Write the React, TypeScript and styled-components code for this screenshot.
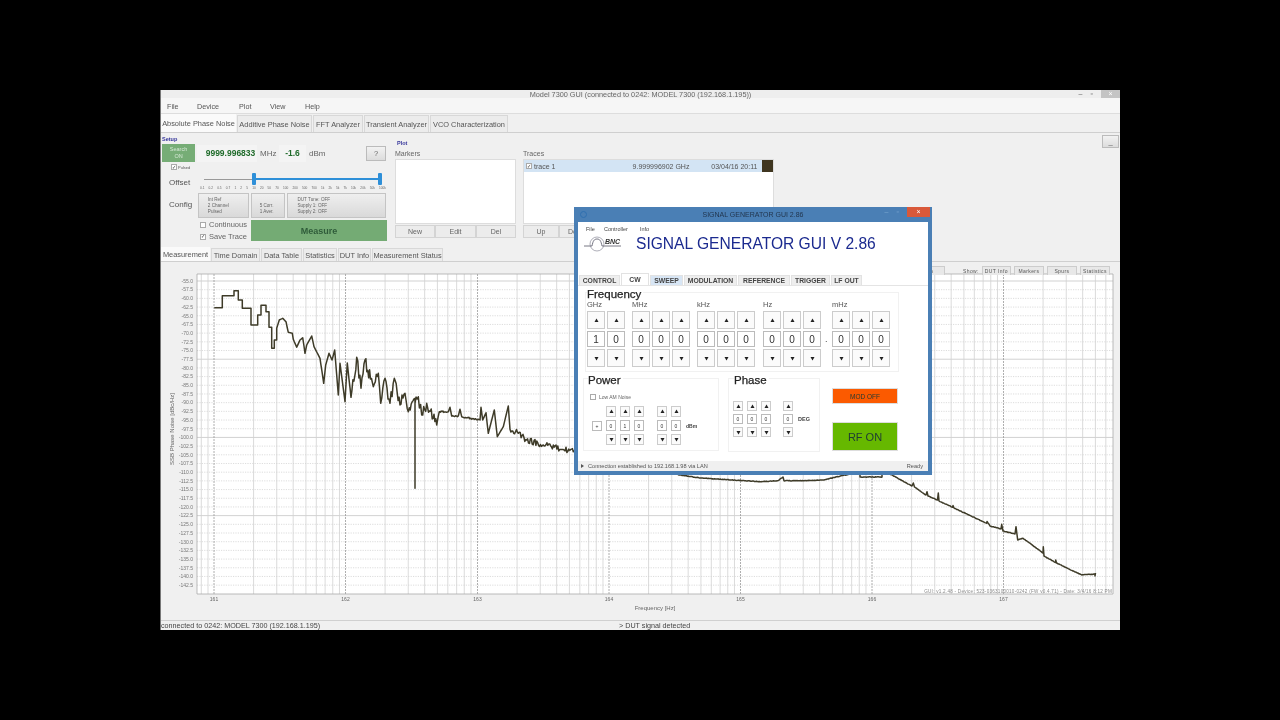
import React from "react";
import styled, { createGlobalStyle } from "styled-components";

const GlobalStyle = createGlobalStyle`
  html, body {
    margin: 0;
    padding: 0;
    background: #000;
    overflow: hidden;
  }
  * { box-sizing: border-box; }
`;

const Page = styled.div`
  width: 1280px;
  height: 720px;
  background: #000;
  padding: 90px 0 0 160px;
  font-family: "Liberation Sans", Arial, sans-serif;
  color: #555;
  filter: blur(0.35px);
`;

const AppWindow = styled.div`
  position: relative;
  width: 960px;
  height: 540px;
  background: #f0f0f0;
  border-left: 1px solid #777;
  overflow: hidden;
`;

const TitleBar = styled.div`
  height: 8px;
  background: #eee;
  display: flex;
  align-items: center;
  justify-content: center;
  font-size: 7.3px;
  color: #666;
  position: relative;
`;

const WinControls = styled.div`
  position: absolute;
  right: 0;
  top: 0;
  height: 8px;
  display: flex;
  align-items: flex-start;
  gap: 8px;
  color: #666;
  font-size: 7px;
  line-height: 7px;
`;

const CloseGray = styled.span`
  width: 19px;
  height: 8px;
  background: #c4c4c4;
  color: #fff;
  text-align: center;
`;

const MenuBar = styled.div`
  height: 16px;
  background: #f6f6f6;
  border-bottom: 1px solid #ddd;
  display: flex;
  align-items: center;
  padding: 2px 0 0 6px;
  font-size: 7.2px;
  color: #555;
`;

const MenuItem = styled.span<{ $w: number }>`
  width: ${(p) => p.$w}px;
`;

const TabRow = styled.div<{ $h: number }>`
  display: flex;
  align-items: flex-end;
  height: ${(p) => p.$h}px;
  border-bottom: 1px solid #cfcfcf;
  background: #f0f0f0;
`;

const Tab = styled.div<{ $w: number; $active?: boolean }>`
  width: ${(p) => p.$w}px;
  height: ${(p) => (p.$active ? "100%" : "calc(100% - 1px)")};
  background: ${(p) => (p.$active ? "#fafafa" : "#ececec")};
  border: 1px solid ${(p) => (p.$active ? "transparent" : "#d8d8d8")};
  border-bottom: none;
  margin-right: 1px;
  display: flex;
  align-items: center;
  justify-content: center;
  font-size: 7.4px;
  color: #555;
  white-space: nowrap;
`;

const ControlArea = styled.div`
  height: 114px;
  display: flex;
  align-items: flex-start;
  padding-left: 1px;
`;

const SetupPanel = styled.div`
  width: 226px;
  margin-right: 7px;
  display: flex;
  flex-direction: column;
  padding-top: 2px;
`;

const SectionTitle = styled.div`
  color: #35359a;
  font-size: 5.5px;
  font-weight: bold;
  height: 9px;
  line-height: 9px;
`;

const ReadoutRow = styled.div`
  height: 18px;
  display: flex;
  align-items: center;
`;

const SearchBox = styled.div`
  width: 33px;
  height: 18px;
  background: #76ad76;
  color: #d5e8d5;
  font-size: 5.5px;
  line-height: 7px;
  text-align: center;
  padding-top: 2px;
  margin-right: 2px;
`;

const Readout = styled.div<{ $w: number; $pl: number }>`
  width: ${(p) => p.$w}px;
  height: 17px;
  background: #f4f4f4;
  color: #1f6b2a;
  font-size: 8.5px;
  font-weight: bold;
  display: flex;
  align-items: center;
  justify-content: center;
  padding-left: ${(p) => p.$pl}px;
  white-space: nowrap;
`;

const Unit = styled.span<{ $w: number }>`
  width: ${(p) => p.$w}px;
  font-size: 8px;
  color: #666;
  padding-left: 3px;
`;

const GreyButton = styled.div<{ $w: number; $h: number }>`
  width: ${(p) => p.$w}px;
  height: ${(p) => p.$h}px;
  border: 1px solid #bbb;
  background: linear-gradient(#f2f2f2, #dcdcdc);
  display: flex;
  align-items: center;
  justify-content: center;
  font-size: 7.5px;
  color: #666;
`;

const PulsedRow = styled.div`
  height: 10px;
  display: flex;
  align-items: center;
  gap: 1px;
  padding-left: 9px;
  font-size: 4px;
  color: #555;
`;

const Check = styled.span<{ $size: number }>`
  display: inline-flex;
  align-items: center;
  justify-content: center;
  width: ${(p) => p.$size}px;
  height: ${(p) => p.$size}px;
  background: #fff;
  border: 1px solid #aaa;
  font-size: ${(p) => p.$size - 1}px;
  line-height: 1;
  color: #333;
  flex-shrink: 0;
`;

const SliderRow = styled.div`
  height: 20px;
  display: flex;
  align-items: flex-start;
`;

const RowLabel = styled.div`
  width: 36px;
  padding: 6px 0 0 7px;
  font-size: 8px;
  color: #555;
`;

const SliderBox = styled.div`
  width: 188px;
  padding-left: 2px;
`;

const SliderTrack = styled.div`
  position: relative;
  margin: 7px 4px 0 4px;
  height: 1px;
  background: #999;
`;

const SliderFill = styled.div`
  position: absolute;
  left: 50px;
  right: 2px;
  top: -1px;
  height: 2px;
  background: #2e8fd8;
`;

const SliderThumb = styled.div<{ $left: number }>`
  position: absolute;
  left: ${(p) => p.$left}px;
  top: -6px;
  width: 4px;
  height: 12px;
  background: #2e8fd8;
  border-radius: 1px;
`;

const SliderTicks = styled.div`
  display: flex;
  justify-content: space-between;
  margin-top: 6px;
  font-size: 3.2px;
  color: #666;
`;

const ConfigRow = styled.div`
  height: 25px;
  display: flex;
  margin-top: 1px;
`;

const ConfigLabel = styled(RowLabel)`
  padding-top: 7px;
`;

const ConfigButton = styled.div<{ $w: number; $center?: boolean }>`
  width: ${(p) => p.$w}px;
  margin-right: 2px;
  border: 1px solid #c4c4c4;
  background: linear-gradient(#efefef, #d9d9d9);
  font-size: 4.6px;
  line-height: 6px;
  color: #666;
  padding: 3px 0 0 ${(p) => (p.$center ? 8 : 9)}px;
`;

const MeasureRow = styled.div`
  height: 21px;
  margin-top: 2px;
  display: flex;
`;

const CheckColumn = styled.div`
  width: 89px;
  padding-left: 38px;
  display: flex;
  flex-direction: column;
  justify-content: space-between;
`;

const CheckLine = styled.label`
  display: flex;
  align-items: center;
  gap: 3px;
  font-size: 7.5px;
  color: #666;
  white-space: nowrap;
`;

const MeasureButton = styled.div`
  width: 136px;
  background: #74ab74;
  color: #2f5c3a;
  font-size: 9px;
  font-weight: bold;
  display: flex;
  align-items: center;
  justify-content: center;
`;

const ListColumn = styled.div<{ $w: number }>`
  width: ${(p) => p.$w}px;
  margin-right: 7px;
  display: flex;
  flex-direction: column;
`;

const PlotTitle = styled(SectionTitle)`
  margin: 6px 0 0 2px;
  height: 8px;
  line-height: 8px;
`;

const ListLabel = styled.div`
  font-size: 7px;
  color: #666;
  height: 12px;
  line-height: 13px;
`;

const ListBox = styled.div`
  height: 65px;
  background: #fff;
  border: 1px solid #ddd;
`;

const TraceRow = styled.div`
  height: 12px;
  background: #d3e4f4;
  display: flex;
  align-items: center;
  padding-left: 2px;
  font-size: 7px;
  color: #555;
`;

const TraceName = styled.span`
  width: 101px;
  padding-left: 2px;
`;

const TraceValue = styled.span<{ $w: number }>`
  width: ${(p) => p.$w}px;
  white-space: nowrap;
`;

const Swatch = styled.span`
  width: 11px;
  height: 12px;
  background: #3f3620;
`;

const ListButtons = styled.div`
  display: flex;
  margin-top: 1px;
`;

const ListButton = styled.div<{ $w: number }>`
  width: ${(p) => p.$w}px;
  height: 13px;
  background: #ececec;
  border: 1px solid #d4d4d4;
  display: flex;
  align-items: center;
  justify-content: center;
  font-size: 7px;
  color: #666;
`;

const CollapseButton = styled(GreyButton)`
  margin: 2px 1px 0 auto;
`;

const PlotArea = styled.div`
  position: relative;
  height: 358px;
  background: #f0f0f0;
`;

const Chart = styled.svg`
  display: block;
`;

const ShowTabs = styled.div`
  position: absolute;
  left: 739px;
  top: 4px;
  display: flex;
  align-items: center;
  height: 9px;
  font-size: 5px;
  letter-spacing: 0.4px;
  color: #555;
`;

const ShowLabel = styled.span`
  margin-left: 18px;
`;

const ShowTab = styled.div<{ $w: number; $ml: number }>`
  width: ${(p) => p.$w}px;
  margin-left: ${(p) => p.$ml}px;
  height: 9px;
  border: 1px solid #ccc;
  border-bottom: none;
  background: #e8e8e8;
  display: flex;
  align-items: center;
  justify-content: center;
  white-space: nowrap;
`;

const StatusBar = styled.div`
  height: 10px;
  border-top: 1px solid #d0d0d0;
  display: flex;
  font-size: 7.2px;
  line-height: 10px;
  color: #444;
  white-space: nowrap;
`;

const StatusLeft = styled.span`
  width: 458px;
`;

/* signal generator dialog, a window floating over the main one */
const Dialog = styled.div`
  position: absolute;
  left: 413px;
  top: 117px;
  width: 358px;
  height: 268px;
  background: #4a7fb5;
  padding: 0 4px 4px;
  display: flex;
  flex-direction: column;
  color: #333;
`;

const DialogTitle = styled.div`
  position: relative;
  height: 15px;
  display: flex;
  align-items: center;
  justify-content: center;
  font-size: 7px;
  color: #22364f;
`;

const DialogIcon = styled.span`
  position: absolute;
  left: 2px;
  top: 4px;
  width: 7px;
  height: 7px;
  border: 1px solid #2f6fb0;
  border-radius: 50%;
`;

const DialogControls = styled.div`
  position: absolute;
  right: -2px;
  top: 0;
  display: flex;
  gap: 8px;
  color: #7ba6d0;
  font-size: 7px;
  line-height: 10px;
`;

const DialogClose = styled.span`
  width: 23px;
  height: 10px;
  background: #d9593a;
  color: #fff;
  text-align: center;
`;

const DialogBody = styled.div`
  flex: 1;
  background: #fff;
  display: flex;
  flex-direction: column;
`;

const DialogMenu = styled.div`
  height: 13px;
  display: flex;
  align-items: center;
  padding-left: 8px;
  font-size: 5.5px;
  color: #444;
`;

const Banner = styled.div`
  height: 38px;
  display: flex;
  align-items: flex-start;
  padding-left: 6px;
`;

const BannerTitle = styled.div`
  margin-left: 14px;
  font-size: 15.6px;
  line-height: 18px;
  color: #1b2a8f;
  white-space: nowrap;
`;

const DialogTabs = styled.div`
  height: 12px;
  display: flex;
  align-items: flex-end;
  padding-left: 1px;
  background: #fff;
`;

const DialogTab = styled.div<{ $w: number; $state?: "active" | "hover" }>`
  width: ${(p) => p.$w}px;
  height: ${(p) => (p.$state === "active" ? "12px" : "10px")};
  margin-right: 1px;
  background: ${(p) => (p.$state === "active" ? "#fff" : p.$state === "hover" ? "#d8e6f5" : "#eee")};
  border: 1px solid #e2e2e2;
  border-bottom: none;
  font-size: 6.8px;
  font-weight: bold;
  color: #444;
  display: flex;
  align-items: center;
  justify-content: center;
  white-space: nowrap;
`;

const DialogContent = styled.div`
  flex: 1;
  border-top: 1px solid #e4e4e4;
  padding: 6px 0 0 7px;
  display: flex;
  flex-direction: column;
  gap: 6px;
`;

const GroupBox = styled.div<{ $w: number; $h: number }>`
  position: relative;
  width: ${(p) => p.$w}px;
  height: ${(p) => p.$h}px;
  border: 1px solid #f1f1f1;
`;

const GroupTitle = styled.div<{ $left: number }>`
  position: absolute;
  left: ${(p) => p.$left}px;
  top: -5px;
  background: #fff;
  padding-right: 2px;
  font-size: 11.5px;
  line-height: 12px;
  color: #222;
  -webkit-text-stroke: 0.25px #222;
`;

const FrequencyRow = styled.div`
  display: flex;
  align-items: flex-start;
  padding: 6px 0 0 1px;
`;

const DigitGroup = styled.div<{ $mr: number }>`
  margin-right: ${(p) => p.$mr}px;
`;

const GroupUnit = styled.div`
  height: 12px;
  font-size: 7.5px;
  line-height: 12px;
  color: #555;
`;

const DigitColumns = styled.div<{ $gap: number }>`
  display: flex;
  gap: ${(p) => p.$gap}px;
`;

const DigitColumn = styled.div`
  display: flex;
  flex-direction: column;
`;

const StepCell = styled.div<{ $w: number; $h: number }>`
  width: ${(p) => p.$w}px;
  height: ${(p) => p.$h}px;
  border: 1px solid #ccc;
  background: #fbfbfb;
  display: flex;
  align-items: center;
  justify-content: center;
  color: #333;
`;

const ValueCell = styled(StepCell)<{ $fs: number; $my: number }>`
  margin: ${(p) => p.$my}px 0;
  background: #fff;
  border-color: #bbb;
  font-size: ${(p) => p.$fs}px;
  color: #333;
`;

const Arrow = styled.svg`
  display: block;
`;

const Dot = styled.div`
  width: 11px;
  margin: 31px 0 0 0;
  padding-left: 4px;
  font-size: 9px;
  line-height: 18px;
  color: #444;
`;

const LowerRow = styled.div`
  display: flex;
  align-items: flex-start;
  margin-left: -2px;
`;

const NoiseLine = styled.div`
  display: flex;
  align-items: center;
  gap: 3px;
  padding: 8px 0 0 6px;
  font-size: 5px;
  color: #666;
  height: 27px;
`;

const SmallGrid = styled.div<{ $left: number; $top: number }>`
  display: flex;
  align-items: center;
  gap: 4px;
  margin-left: ${(p) => p.$left}px;
  margin-top: ${(p) => p.$top}px;
`;

const SmallGap = styled.div<{ $w: number }>`
  width: ${(p) => p.$w}px;
`;

const SignButton = styled.div`
  width: 10px;
  height: 10px;
  border: 1px solid #bbb;
  font-size: 5px;
  display: flex;
  align-items: center;
  justify-content: center;
`;

const SmallUnit = styled.div<{ $ml: number; $fs: number }>`
  margin-left: ${(p) => p.$ml}px;
  font-size: ${(p) => p.$fs}px;
  font-weight: bold;
  color: #444;
`;

const ActionColumn = styled.div`
  margin: 10px 0 0 12px;
  display: flex;
  flex-direction: column;
  gap: 18px;
`;

const ActionButton = styled.div<{ $bg: string; $h: number; $fs: number }>`
  width: 66px;
  height: ${(p) => p.$h}px;
  background: ${(p) => p.$bg};
  border: 1px solid #ddd;
  display: flex;
  align-items: center;
  justify-content: center;
  font-size: ${(p) => p.$fs}px;
  color: #1f3a34;
`;

const DialogStatus = styled.div`
  height: 10px;
  background: #f0f0f0;
  display: flex;
  align-items: center;
  justify-content: space-between;
  padding: 0 5px 0 3px;
  font-size: 5.6px;
  color: #555;
`;

const StatusText = styled.span`
  display: flex;
  align-items: center;
  gap: 4px;
`;

const StatusArrow = styled.span`
  width: 0;
  height: 0;
  border-left: 3px solid #555;
  border-top: 2px solid transparent;
  border-bottom: 2px solid transparent;
`;

// chart geometry, in page pixels
const OX = 161;
const OY = 262;
const PLOT = { left: 197, right: 1113, top: 274, bottom: 594 };
const DECADES = [214, 345.5, 477.5, 609, 740.5, 872, 1003.5];
const DECADE = 131.5;

const yLabels: { y: number; label: string }[] = [];
for (let i = 0; i <= 35; i++) {
  yLabels.push({ y: 281 + i * 8.69, label: (-55 - i * 2.5).toFixed(1) });
}

const minorLines: { x: number; major: boolean }[] = [];
[201.3, 208].forEach((x) => minorLines.push({ x, major: false }));
DECADES.forEach((d) => {
  minorLines.push({ x: d, major: true });
  for (let n = 2; n <= 9; n++) {
    const x = d + Math.log10(n) * DECADE;
    if (x < PLOT.right) minorLines.push({ x, major: false });
  }
});

// hand-read points of the trace, the noisy stretch gets jitter added below
const tracePoints: [number, number][] = [
  [214.3, 307.7], [222.3, 307.7], [222.3, 295.7], [234, 295.7], [234, 290.7], [238.3, 290.7],
  [238.3, 300], [242.3, 300], [242.3, 308.3], [251, 308.3], [251, 325], [257.7, 325],
  [257.7, 315], [261, 315], [261, 305.3], [266, 305.3], [266, 311.7], [269, 311.7],
  [269, 327.3], [271.7, 327.3], [271.7, 348.3], [274.3, 348.3], [274.3, 340], [276.7, 340],
  [276.7, 328.3], [279.3, 320], [282.7, 318.3], [286, 321.7], [288.3, 332.3], [292.3, 333.3],
  [293.3, 339.3], [296.7, 347.3], [300, 340], [302.7, 337.7], [305, 353.3], [306.7, 345],
  [311.7, 336], [314, 346.7], [320, 358.3], [323.7, 383.3], [325.7, 365], [329, 353.3],
  [332, 360], [334.7, 350], [338.3, 395], [340, 363.3], [345, 401.7], [347.3, 363],
  [351, 397.3], [356.7, 357.3], [361, 388.3], [365, 360], [373.3, 386.7], [378.3, 373.3],
  [380.7, 403.3], [385, 378.3], [390, 403.3], [394.3, 378.3], [400, 405], [405, 393.3],
  [408.3, 411.7], [415, 398.3], [415, 488.3], [415, 403.3], [418.3, 396.7], [421.7, 415],
  [426.7, 403.3], [436.7, 425], [439.3, 411.7], [448.3, 411.7], [450, 407.3], [451.7, 416],
  [458.3, 416], [460, 409.3], [461.7, 416.7], [480, 420], [481, 407.3], [482.7, 420],
  [486, 412.7], [488.3, 433.3], [494.3, 410], [497.3, 436.7], [503.3, 426.7], [508.3, 406],
  [510, 429.3], [518.3, 433.3], [526.7, 440], [543.3, 445], [573.3, 451.7],
  [620, 462], [680, 475], [700, 478], [760, 481.7], [778, 480.7], [783, 477], [784, 480.7],
  [803.3, 480.7], [823, 480], [850, 474], [860, 474], [860, 477], [882, 477], [882, 474],
  [890, 474], [912, 486], [913.3, 483], [914.5, 487], [926, 495], [927, 491.7], [928, 496],
  [937.5, 500], [938.3, 493], [939, 501], [952.7, 507.3], [953, 505.5], [954, 508],
  [986.7, 523.3], [987, 521.5], [990, 526], [1001, 529], [1001.7, 524.3], [1003, 531],
  [1015, 534], [1016, 526.7], [1017.7, 540], [1023, 538.3], [1043, 553], [1043.3, 546.7],
  [1044, 556], [1055.5, 562.5], [1055.7, 560], [1056.5, 563], [1081.7, 575], [1095, 574],
  [1095, 576], [1095.5, 573],
];

function noiseAt(x: number) {
  if (x > 352 && x < 437) return 6;
  if (x >= 437 && x < 480) return 0.8;
  if (x >= 510 && x < 575) return 3;
  if (x >= 575 && x < 1100) return 0.3;
  return 0;
}

function buildTrace() {
  let seed = 73;
  const rand = () => {
    seed = (seed * 1103515245 + 12345) & 0x7fffffff;
    return seed / 0x7fffffff - 0.5;
  };
  const parts: string[] = [];
  tracePoints.forEach(([x, y], i) => {
    if (i > 0) {
      const [px, py] = tracePoints[i - 1];
      const steps = Math.floor((x - px) / 0.9);
      for (let s = 1; s < steps; s++) {
        const t = s / steps;
        const ax = px + (x - px) * t;
        const ay = py + (y - py) * t;
        parts.push(`L${(ax - OX).toFixed(1)} ${(ay + rand() * noiseAt(ax) * 2 - OY).toFixed(1)}`);
      }
    }
    parts.push(`${i === 0 ? "M" : "L"}${(x - OX).toFixed(1)} ${(y - OY).toFixed(1)}`);
  });
  return parts.join("");
}

const TRACE_PATH = buildTrace();

function PhaseChart() {
  return (
    <Chart width={959} height={358} viewBox="0 0 959 358">
      <rect x={PLOT.left - OX} y={PLOT.top - OY} width={PLOT.right - PLOT.left} height={PLOT.bottom - PLOT.top} fill="#fff" />
      {yLabels.map((l, i) => (
        <line
          key={l.label}
          x1={PLOT.left - OX}
          x2={PLOT.right - OX}
          y1={l.y - OY}
          y2={l.y - OY}
          stroke={i % 9 === 0 ? "#bdbdbd" : "#cfcfcf"}
          strokeWidth={0.7}
          strokeDasharray={i % 9 === 0 ? undefined : "1.2 1.2"}
        />
      ))}
      {minorLines.map((m) => (
        <line
          key={m.x}
          x1={m.x - OX}
          x2={m.x - OX}
          y1={PLOT.top - OY}
          y2={PLOT.bottom - OY}
          stroke={m.major ? "#9a9a9a" : "#d2d2d2"}
          strokeWidth={0.8}
          strokeDasharray={m.major ? "2 1" : undefined}
        />
      ))}
      <path
        d={`M${PLOT.left - OX} ${PLOT.top - OY}V${PLOT.bottom - OY}H${PLOT.right - OX}V${PLOT.top - OY}H${PLOT.left - OX}`}
        fill="none"
        stroke="#aaa"
        strokeWidth={0.8}
      />
      <path d={TRACE_PATH} fill="none" stroke="#3e3b28" strokeWidth={1.5} strokeLinejoin="round" />
      {yLabels.map((l) => (
        <text key={l.label} x={193 - OX} y={l.y - OY + 1.8} fontSize={5} textAnchor="end" fill="#777">
          {l.label}
        </text>
      ))}
      <text
        x={0}
        y={0}
        fontSize={6}
        fill="#666"
        textAnchor="middle"
        transform={`translate(${174 - OX} ${429 - OY}) rotate(-90)`}
      >
        SSB Phase Noise [dBc/Hz]
      </text>
      {DECADES.map((d, i) => (
        <text key={d} x={d - OX} y={600.5 - OY} fontSize={5} textAnchor="middle" fill="#666">
          {`16${i + 1}`}
        </text>
      ))}
      <text x={655 - OX} y={610 - OY} fontSize={6} textAnchor="middle" fill="#666">
        Frequency [Hz]
      </text>
      <text x={1112 - OX} y={593 - OY} fontSize={4.6} textAnchor="end" fill="#8a8a8a" letterSpacing={0.25}>
        GUI: v1.2.48 - Device: 523-0363100010-0242 (FW v0.4.71) - Date: 3/4/16 8:12 PM
      </text>
    </Chart>
  );
}

function Triangle({ size, down }: { size: number; down?: boolean }) {
  return (
    <Arrow width={size} height={size} viewBox="0 0 6 6">
      <path d={down ? "M0.6 1.2H5.4L3 5.4Z" : "M3 0.6L5.4 4.8H0.6Z"} fill="#222" />
    </Arrow>
  );
}

function Digits({ values, w, h, my, col, fs, arrow }: { values: string[]; w: number; h: number; my: number; col: number; fs: number; arrow: number }) {
  return (
    <DigitColumns $gap={col}>
      {values.map((v, i) => (
        <DigitColumn key={i}>
          <StepCell $w={w} $h={h}>
            <Triangle size={arrow} />
          </StepCell>
          <ValueCell $w={w} $h={h - (w > 12 ? 2 : 0)} $fs={fs} $my={my}>
            {v}
          </ValueCell>
          <StepCell $w={w} $h={h}>
            <Triangle size={arrow} down />
          </StepCell>
        </DigitColumn>
      ))}
    </DigitColumns>
  );
}

const freqGroups = [
  { unit: "GHz", digits: ["1", "0"], mr: 7 },
  { unit: "MHz", digits: ["0", "0", "0"], mr: 7 },
  { unit: "kHz", digits: ["0", "0", "0"], mr: 8 },
  { unit: "Hz", digits: ["0", "0", "0"], mr: 0 },
];

const topTabs = [
  { t: "Absolute Phase Noise", w: 75, active: true },
  { t: "Additive Phase Noise", w: 75 },
  { t: "FFT Analyzer", w: 50 },
  { t: "Transient Analyzer", w: 65 },
  { t: "VCO Characterization", w: 78 },
];

const measureTabs = [
  { t: "Measurement", w: 49, active: true },
  { t: "Time Domain", w: 49 },
  { t: "Data Table", w: 41 },
  { t: "Statistics", w: 34 },
  { t: "DUT Info", w: 33 },
  { t: "Measurement Status", w: 71 },
];

const offsets = ["0.1", "0.2", "0.5", "0.7", "1", "2", "5", "10", "20", "50", "70", "100", "200", "500", "700", "1k", "2k", "5k", "7k", "10k", "20k", "50k", "100k"];

const dialogTabs: { t: string; w: number; state?: "active" | "hover" }[] = [
  { t: "CONTROL", w: 41 },
  { t: "CW", w: 28, state: "active" },
  { t: "SWEEP", w: 33, state: "hover" },
  { t: "MODULATION", w: 53 },
  { t: "REFERENCE", w: 52 },
  { t: "TRIGGER", w: 39 },
  { t: "LF OUT", w: 31 },
];

function SignalGeneratorDialog() {
  return (
    <Dialog>
      <DialogTitle>
        <DialogIcon />
        SIGNAL GENERATOR GUI 2.86
        <DialogControls>
          <span>–</span>
          <span>▫</span>
          <DialogClose>×</DialogClose>
        </DialogControls>
      </DialogTitle>
      <DialogBody>
        <DialogMenu>
          <MenuItem $w={18}>File</MenuItem>
          <MenuItem $w={36}>Controller</MenuItem>
          <MenuItem $w={20}>Info</MenuItem>
        </DialogMenu>
        <Banner>
          <svg width={38} height={19} viewBox="0 0 38 19">
            <path d="M0 11H8M8 11C9 6 10 4 13 4S17 6 18 11H37" fill="none" stroke="#556" strokeWidth={0.8} />
            <circle cx={13} cy={9} r={7} fill="none" stroke="#778" strokeWidth={0.6} />
            <text x={21} y={9} fontSize={7} fontWeight="bold" fontStyle="italic" fill="#333">
              BNC
            </text>
          </svg>
          <BannerTitle>SIGNAL GENERATOR GUI V 2.86</BannerTitle>
        </Banner>
        <DialogTabs>
          {dialogTabs.map((t) => (
            <DialogTab key={t.t} $w={t.w} $state={t.state}>
              {t.t}
            </DialogTab>
          ))}
        </DialogTabs>
        <DialogContent>
          <GroupBox $w={314} $h={80}>
            <GroupTitle $left={1}>Frequency</GroupTitle>
            <FrequencyRow>
              {freqGroups.map((g) => (
                <DigitGroup key={g.unit} $mr={g.mr}>
                  <GroupUnit>{g.unit}</GroupUnit>
                  <Digits values={g.digits} w={18} h={18} my={2} col={2} fs={10} arrow={5} />
                </DigitGroup>
              ))}
              <Dot>.</Dot>
              <DigitGroup $mr={0}>
                <GroupUnit>mHz</GroupUnit>
                <Digits values={["0", "0", "0"]} w={18} h={18} my={2} col={2} fs={10} arrow={5} />
              </DigitGroup>
            </FrequencyRow>
          </GroupBox>
          <LowerRow>
            <GroupBox $w={136} $h={73}>
              <GroupTitle $left={4}>Power</GroupTitle>
              <NoiseLine>
                <Check $size={6} />
                Low AM Noise
              </NoiseLine>
              <SmallGrid $left={8} $top={0}>
                <SignButton>+</SignButton>
                <Digits values={["0", "1", "0"]} w={10} h={11} my={3} col={4} fs={5} arrow={5} />
                <SmallGap $w={5} />
                <Digits values={["0", "0"]} w={10} h={11} my={3} col={4} fs={5} arrow={5} />
                <SmallUnit $ml={1} $fs={5}>
                  dBm
                </SmallUnit>
              </SmallGrid>
            </GroupBox>
            <SmallGap $w={9} />
            <GroupBox $w={92} $h={74}>
              <GroupTitle $left={5}>Phase</GroupTitle>
              <SmallGrid $left={4} $top={22}>
                <Digits values={["0", "0", "0"]} w={10} h={10} my={3} col={4} fs={5} arrow={5} />
                <SmallGap $w={4} />
                <Digits values={["0"]} w={10} h={10} my={3} col={4} fs={5} arrow={5} />
                <SmallUnit $ml={1} $fs={5.5}>
                  DEG
                </SmallUnit>
              </SmallGrid>
            </GroupBox>
            <ActionColumn>
              <ActionButton $bg="#fb5a00" $h={16} $fs={6.5}>
                MOD OFF
              </ActionButton>
              <ActionButton $bg="#66b800" $h={29} $fs={11}>
                RF ON
              </ActionButton>
            </ActionColumn>
          </LowerRow>
        </DialogContent>
        <DialogStatus>
          <StatusText>
            <StatusArrow />
            Connection established to 192.168.1.98 via LAN
          </StatusText>
          <span>Ready</span>
        </DialogStatus>
      </DialogBody>
    </Dialog>
  );
}

function App() {
  return (
    <>
      <GlobalStyle />
      <Page>
        <AppWindow>
          <TitleBar>
            Model 7300 GUI (connected to 0242: MODEL 7300 (192.168.1.195))
            <WinControls>
              <span>–</span>
              <span>▫</span>
              <CloseGray>×</CloseGray>
            </WinControls>
          </TitleBar>
          <MenuBar>
            <MenuItem $w={30}>File</MenuItem>
            <MenuItem $w={42}>Device</MenuItem>
            <MenuItem $w={31}>Plot</MenuItem>
            <MenuItem $w={35}>View</MenuItem>
            <MenuItem $w={30}>Help</MenuItem>
          </MenuBar>
          <TabRow $h={19}>
            {topTabs.map((t) => (
              <Tab key={t.t} $w={t.w} $active={t.active}>
                {t.t}
              </Tab>
            ))}
          </TabRow>
          <ControlArea>
            <SetupPanel>
              <SectionTitle>Setup</SectionTitle>
              <ReadoutRow>
                <SearchBox>
                  Search
                  <br />
                  ON
                </SearchBox>
                <Readout $w={60} $pl={7}>9999.996833</Readout>
                <Unit $w={22}>MHz</Unit>
                <Readout $w={27} $pl={0}>-1.6</Readout>
                <Unit $w={60}>dBm</Unit>
                <GreyButton $w={20} $h={15}>
                  ?
                </GreyButton>
              </ReadoutRow>
              <PulsedRow>
                <Check $size={6}>✓</Check>
                Pulsed
              </PulsedRow>
              <SliderRow>
                <RowLabel>Offset</RowLabel>
                <SliderBox>
                  <SliderTrack>
                    <SliderFill />
                    <SliderThumb $left={48} />
                    <SliderThumb $left={174} />
                  </SliderTrack>
                  <SliderTicks>
                    {offsets.map((o) => (
                      <span key={o}>{o}</span>
                    ))}
                  </SliderTicks>
                </SliderBox>
              </SliderRow>
              <ConfigRow>
                <ConfigLabel>Config</ConfigLabel>
                <ConfigButton $w={51}>
                  Int Ref
                  <br />
                  2 Channel
                  <br />
                  Pulsed
                </ConfigButton>
                <ConfigButton $w={35} $center>
                  <br />5 Corr.
                  <br />1 Aver.
                </ConfigButton>
                <ConfigButton $w={99}>
                  DUT Tune: OFF
                  <br />
                  Supply 1: OFF
                  <br />
                  Supply 2: OFF
                </ConfigButton>
              </ConfigRow>
              <MeasureRow>
                <CheckColumn>
                  <CheckLine>
                    <Check $size={6} />
                    Continuous
                  </CheckLine>
                  <CheckLine>
                    <Check $size={6}>✓</Check>
                    Save Trace
                  </CheckLine>
                </CheckColumn>
                <MeasureButton>Measure</MeasureButton>
              </MeasureRow>
            </SetupPanel>
            <ListColumn $w={121}>
              <PlotTitle>Plot</PlotTitle>
              <ListLabel>Markers</ListLabel>
              <ListBox />
              <ListButtons>
                <ListButton $w={40}>New</ListButton>
                <ListButton $w={41}>Edit</ListButton>
                <ListButton $w={40}>Del</ListButton>
              </ListButtons>
            </ListColumn>
            <ListColumn $w={251}>
              <PlotTitle />
              <ListLabel>Traces</ListLabel>
              <ListBox>
                <TraceRow>
                  <Check $size={6}>✓</Check>
                  <TraceName>trace 1</TraceName>
                  <TraceValue $w={79}>9.999996902 GHz</TraceValue>
                  <TraceValue $w={51}>03/04/16 20:11</TraceValue>
                  <Swatch />
                </TraceRow>
              </ListBox>
              <ListButtons>
                <ListButton $w={36}>Up</ListButton>
                <ListButton $w={36}>Down</ListButton>
              </ListButtons>
            </ListColumn>
            <CollapseButton $w={17} $h={13}>
              _
            </CollapseButton>
          </ControlArea>
          <TabRow $h={15}>
            {measureTabs.map((t) => (
              <Tab key={t.t} $w={t.w} $active={t.active}>
                {t.t}
              </Tab>
            ))}
          </TabRow>
          <PlotArea>
            <PhaseChart />
            <ShowTabs>
              <ShowTab $w={45} $ml={0}>Zoom In</ShowTab>
              <ShowLabel>Show:</ShowLabel>
              <ShowTab $w={29} $ml={3}>DUT Info</ShowTab>
              <ShowTab $w={30} $ml={3}>Markers</ShowTab>
              <ShowTab $w={30} $ml={3}>Spurs</ShowTab>
              <ShowTab $w={30} $ml={3}>Statistics</ShowTab>
            </ShowTabs>
          </PlotArea>
          <StatusBar>
            <StatusLeft>connected to 0242: MODEL 7300 (192.168.1.195)</StatusLeft>
            <span>&gt; DUT signal detected</span>
          </StatusBar>
          <SignalGeneratorDialog />
        </AppWindow>
      </Page>
    </>
  );
}

export default App;
